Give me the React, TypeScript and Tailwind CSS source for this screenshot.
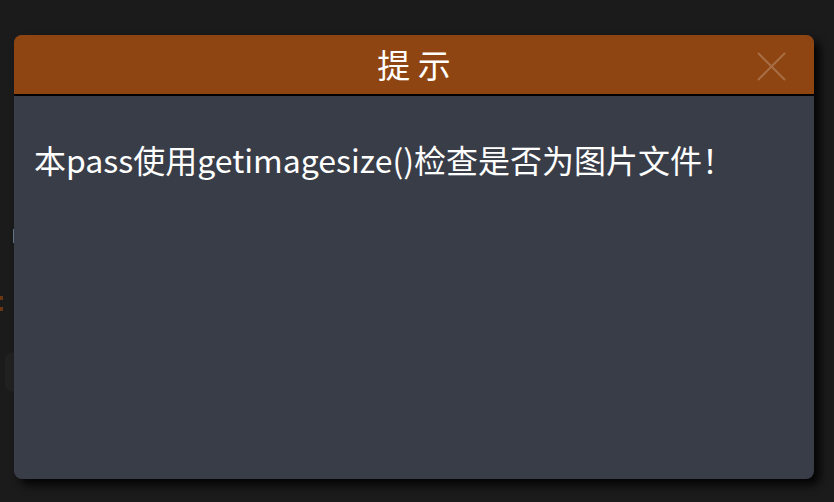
import React from 'react'

const cjk = '"Noto Sans CJK SC", "Noto Sans", sans-serif'

function BackPage() {
  // page content that sits under the dialog; only a sliver shows at the left edge
  return (
    <div className="flex flex-col pl-[5px] pt-[229px]">
      <div className="ml-[8px] h-[14px] w-[40px] border-l border-[#6b7c8f]" />
      <div className="mt-[49px] flex items-start gap-[8px]">
        <div className="-ml-[5px] flex flex-col gap-[7px] pt-[4px]">
          <div className="h-[4px] w-[3px] bg-[#6a3614]" />
          <div className="h-[4px] w-[3px] bg-[#6a3614]" />
        </div>
        <div className="flex flex-col gap-[8px]">
          <div className="ml-[8px] h-[2px] w-[2px] bg-[#4b5868]" />
          <div className="ml-[6px] h-[2px] w-[3px] bg-[#6e7680]" />
          <div className="ml-[6px] h-[3px] w-[3px] bg-[#5a6a7a]" />
        </div>
      </div>
      <div className="mt-[37px] h-[40px] w-[120px] rounded-[8px] bg-[#212121]" />
    </div>
  )
}

function CloseIcon() {
  return (
    <svg width="29" height="29" viewBox="0 0 29 29" fill="none">
      <path d="M1 1 L28 28 M28 1 L1 28" stroke="#ffffff" strokeOpacity="0.22" strokeWidth="2" />
    </svg>
  )
}

export default function App() {
  return (
    <div className="relative h-[502px] w-[834px] overflow-hidden bg-[#1b1b1b]" style={{ fontFamily: cjk }}>
      <BackPage />

      {/* Dialog */}
      <div className="absolute left-[14px] top-[35px] flex h-[444px] w-[800px] flex-col overflow-hidden rounded-[8px] bg-[#393d48] shadow-[6px_6px_10px_rgba(0,0,0,0.85)]">
        <div className="relative flex h-[61px] shrink-0 items-center justify-center border-b-2 border-black bg-[#8f4511]">
          <span className="text-[33px] leading-none text-white">提 示</span>
          <button className="absolute right-[28px] top-[17px]">
            <CloseIcon />
          </button>
        </div>
        <div className="px-[20px] pt-[43px] text-[32px] leading-[40px] text-white">
          本pass使用getimagesize()检查是否为图片文件！
        </div>
      </div>
    </div>
  )
}
